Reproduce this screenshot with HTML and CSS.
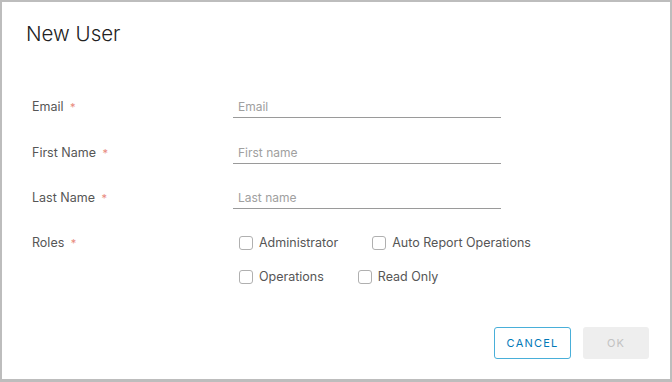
FILE: index.html
```html
<!DOCTYPE html>
<html lang="en">
<head>
    <meta charset="UTF-8">
    <meta name="viewport" content="width=device-width, initial-scale=1.0">
    <title>New User</title>
    <link rel="stylesheet" href="styles.css">
</head>
<body>
    <div class="modal">
        <h3 class="modal-title">New User</h3>

        <form class="user-form">
            <div class="form-row">
                <label class="form-label">Email <span class="required">*</span></label>
                <div class="form-field">
                    <input type="text" class="text-input" placeholder="Email">
                </div>
            </div>
            <div class="form-row">
                <label class="form-label">First Name <span class="required">*</span></label>
                <div class="form-field">
                    <input type="text" class="text-input" placeholder="First name">
                </div>
            </div>
            <div class="form-row">
                <label class="form-label">Last Name <span class="required">*</span></label>
                <div class="form-field">
                    <input type="text" class="text-input" placeholder="Last name">
                </div>
            </div>
            <div class="form-row roles-row">
                <label class="form-label">Roles <span class="required">*</span></label>
                <div class="roles">
                    <div class="roles-line">
                        <label class="check"><span class="box"></span>Administrator</label>
                        <label class="check"><span class="box"></span>Auto Report Operations</label>
                    </div>
                    <div class="roles-line">
                        <label class="check"><span class="box"></span>Operations</label>
                        <label class="check"><span class="box"></span>Read Only</label>
                    </div>
                </div>
            </div>
        </form>

        <div class="modal-footer">
            <button class="btn btn-outline">CANCEL</button>
            <button class="btn btn-disabled" disabled>OK</button>
        </div>
    </div>
</body>
</html>
```

FILE: styles.css
```css
:root {
    --text-color: #565656;
    --muted-color: #a0a0a0;
    --line-color: #9a9a9a;
    --blue: #0079b8;
    --blue-border: #49afd9;
    --red: #e8897b;
}

* {
    margin: 0;
    padding: 0;
    box-sizing: border-box;
}

body {
    font-family: Inter, "Noto Sans", sans-serif;
    color: var(--text-color);
    background: white;
}

.modal {
    width: 672px;
    height: 382px;
    border: 2px solid #bdbdbd;
    border-bottom-width: 3px;
    padding: 20px 21px 0 24px;
    display: flex;
    flex-direction: column;
}

.modal-title {
    font-size: 20.5px;
    font-weight: 300;
    color: #222;
    line-height: 24px;
    margin-bottom: 38px;
}

.user-form {
    display: flex;
    flex-direction: column;
    gap: 11.5px;
    padding-left: 6px;
}

.form-row {
    display: flex;
    align-items: flex-end;
    height: 34px;
}

.form-label {
    width: 201px;
    font-size: 12.5px;
    line-height: 16px;
    padding-bottom: 3px;
}

.required {
    color: var(--red);
    font-size: 11px;
    margin-left: 3px;
}

.form-field {
    width: 268px;
}

.text-input {
    width: 100%;
    border: none;
    border-bottom: 1px solid var(--line-color);
    font-family: inherit;
    font-size: 12px;
    padding: 0 5px 0;
    height: 22px;
    outline: none;
    color: var(--text-color);
}

.text-input::placeholder {
    color: var(--muted-color);
}

.roles-row {
    align-items: flex-start;
    height: auto;
    padding-top: 14px;
}

.roles-row .form-label {
    padding-bottom: 0;
}

.roles {
    display: flex;
    flex-direction: column;
    gap: 18px;
    padding-left: 6px;
}

.roles-line {
    display: flex;
    gap: 34px;
}

.check {
    display: flex;
    align-items: center;
    gap: 6px;
    font-size: 12.5px;
    line-height: 16px;
}

.box {
    width: 14px;
    height: 14px;
    border: 1px solid #b0b0b0;
    border-radius: 3px;
}

.modal-footer {
    margin-top: auto;
    display: flex;
    justify-content: flex-end;
    gap: 12px;
    padding-bottom: 20px;
}

.btn {
    height: 32px;
    font-family: inherit;
    font-size: 11px;
    letter-spacing: 1.2px;
    border-radius: 3px;
    background: white;
}

.btn-outline {
    width: 77px;
    border: 1px solid var(--blue-border);
    color: var(--blue);
}

.btn-disabled {
    width: 66px;
    border: none;
    background: #eeeeee;
    color: #c2c2c2;
}
```
